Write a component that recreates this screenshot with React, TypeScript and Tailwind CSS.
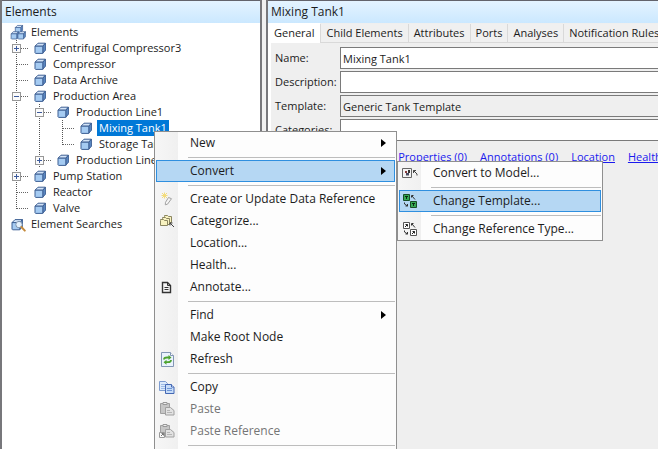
import type { ReactNode } from "react";

type Guide = "line" | "tee" | "end" | "plus" | "minus" | "none";

type TreeRow = { label: string; guides: Guide[]; icon?: "cube" | "cubes" | "search"; selected?: boolean };

const rows: TreeRow[] = [
  { label: "Centrifugal Compressor3", guides: ["plus"] },
  { label: "Compressor", guides: ["tee"] },
  { label: "Data Archive", guides: ["tee"] },
  { label: "Production Area", guides: ["minus"] },
  { label: "Production Line1", guides: ["line", "minus"] },
  { label: "Mixing Tank1", guides: ["line", "line", "tee"], selected: true },
  { label: "Storage Tank1", guides: ["line", "line", "end"] },
  { label: "Production Line2", guides: ["line", "plus"] },
  { label: "Pump Station", guides: ["plus"] },
  { label: "Reactor", guides: ["tee"] },
  { label: "Valve", guides: ["end"] },
];

function CubeShape() {
  return (
    <g stroke="#3d5f93" strokeWidth="1" strokeLinejoin="round">
      <path d="M1 4.2 4 1.2h7.4l-2.6 3z" fill="#d3e4f8" />
      <path d="M8.8 4.2l2.6-3v7l-2.6 3z" fill="#5f8cc6" />
      <path d="M1 4.2h7.8v7.2H1.6L1 10.8z" fill="#a5cbf2" />
    </g>
  );
}

function CubeIcon() {
  return (
    <svg viewBox="0 0 12 12" className="h-3 w-3 shrink-0" aria-hidden="true">
      <CubeShape />
    </svg>
  );
}

function CubesIcon() {
  return (
    <svg viewBox="0 0 16 16" className="h-4 w-4 shrink-0" aria-hidden="true">
      <g transform="translate(4.6 0.6) scale(0.7)"><CubeShape /></g>
      <g transform="translate(0.4 6.8) scale(0.72)"><CubeShape /></g>
      <g transform="translate(7.2 6.8) scale(0.72)"><CubeShape /></g>
    </svg>
  );
}

function SearchCubeIcon() {
  return (
    <svg viewBox="0 0 16 16" className="h-4 w-4 shrink-0" aria-hidden="true">
      <g transform="translate(1 2.4)"><CubeShape /></g>
      <circle cx="9" cy="8.6" r="3.2" fill="#e3f1fd" stroke="#7f93ad" />
      <path d="M11.4 11l3.4 3.6" stroke="#c58a3c" strokeWidth="2" strokeLinecap="round" />
    </svg>
  );
}

function GuideCell({ kind, label }: { kind: Guide; label: string }) {
  const box = kind === "plus" || kind === "minus";
  const svg = (
    <svg viewBox="0 0 23 16" className="block h-4 w-[23px]" aria-hidden="true" shapeRendering="crispEdges">
      {kind !== "none" && (
        <path d={kind === "end" ? "M5.5 0V9" : "M5.5 0V16"} stroke="#555" strokeDasharray="1 1" />
      )}
      {kind !== "line" && kind !== "none" && <path d="M6 8.5h12" stroke="#666" strokeDasharray="1 1" />}
      {box && (
        <>
          <rect x="1.5" y="4.5" width="8" height="8" fill="#fbfbfb" stroke="#979797" />
          <path d="M3 8.5h5" stroke="#3c5a9c" />
          {kind === "plus" && <path d="M5.5 6v5" stroke="#3c5a9c" />}
        </>
      )}
    </svg>
  );
  return box ? (
    <button type="button" aria-label={`Toggle ${label}`} className="shrink-0">{svg}</button>
  ) : (
    <span className="shrink-0">{svg}</span>
  );
}

function Header({ children }: { children: ReactNode }) {
  return (
    <h2 className="flex h-[23px] items-center border-t border-[#63636b] bg-linear-to-b from-[#e4f3ff] to-[#cbe8ff] px-[3px] text-xs text-[#1c1c1c]">
      {children}
    </h2>
  );
}

function ElementsTree() {
  return (
    <ul className="pt-px text-[11px] leading-4">
      <li className="flex h-4 items-center gap-[3px] pl-2">
        <CubesIcon />
        <span className="px-0.5">Elements</span>
      </li>
      {rows.map((r) => (
        <li key={r.label} className="flex h-4 items-center pl-[9px]">
          {r.guides.map((g, i) => (
            <GuideCell key={i} kind={g} label={r.label} />
          ))}
          <CubeIcon />
          <span className={r.selected ? "ml-[5px] bg-[#0078d7] px-0.5 text-white" : "ml-[5px] px-0.5"}>{r.label}</span>
        </li>
      ))}
      <li className="flex h-4 items-center gap-[3px] pl-2">
        <SearchCubeIcon />
        <span className="px-0.5">Element Searches</span>
      </li>
    </ul>
  );
}

const tabs = ["Child Elements", "Attributes", "Ports", "Analyses", "Notification Rules", "Workflow"];

function Field({ id, label, value, readOnly }: { id: string; label: string; value?: string; readOnly?: boolean }) {
  return (
    <div className="flex items-center">
      <label htmlFor={id} className="w-[65px] shrink-0">{label}</label>
      <input
        id={id}
        defaultValue={value}
        readOnly={readOnly}
        className={
          readOnly
            ? "h-[22px] min-w-0 flex-1 border border-r-0 border-[#7a7a7a] bg-[#efefef] px-0.5 outline-none"
            : "h-[22px] min-w-0 flex-1 border border-r-0 border-[#7a7a7a] bg-white px-0.5 outline-none"
        }
      />
    </div>
  );
}

function Details() {
  return (
    <section className="flex min-w-0 flex-1 flex-col overflow-hidden border-l-2 border-[#77777b] bg-white">
      <Header>Mixing Tank1</Header>
      <div role="tablist" className="flex h-5 shrink-0 items-stretch overflow-hidden bg-[#efefef] text-[11px] whitespace-nowrap">
        <button role="tab" aria-selected="true" className="shrink-0 bg-white px-1.5">General</button>
        {tabs.map((t) => (
          <button key={t} role="tab" aria-selected="false" className="mt-px shrink-0 border-b border-l border-[#d9d9d9] bg-[#f0f0f0] px-[5px]">
            {t}
          </button>
        ))}
      </div>
      <div className="ml-[3px] flex-1 overflow-hidden bg-[#efefef] pt-1 pl-1 text-[11px]">
        <div className="flex flex-col gap-0.5">
          <Field id="name" label="Name:" value="Mixing Tank1" />
          <Field id="description" label="Description:" />
          <Field id="template" label="Template:" value="Generic Tank Template" readOnly />
          <Field id="categories" label="Categories:" />
        </div>
        <nav className="mt-2 flex gap-[13px] pl-[72px] leading-4 whitespace-nowrap text-[#1a1aee] underline">
          <a href="#properties">Extended Properties (0)</a>
          <a href="#annotations">Annotations (0)</a>
          <a href="#location">Location</a>
          <a href="#health">Health</a>
          <a href="#security">Security</a>
        </nav>
      </div>
    </section>
  );
}

function PencilIcon() {
  return (
    <svg viewBox="0 0 16 16" className="h-4 w-4" aria-hidden="true">
      <path d="M3 2l5 5M8 2L3 7M5.5 1.5v6M2.5 4.5h6" stroke="#f3dc7c" />
      <path d="M9.5 6.5l3 1.2-4 5.5-2.2.6.2-2.5z" fill="#f5f5f5" stroke="#a2a2a2" />
    </svg>
  );
}

function CategorizeIcon() {
  return (
    <svg viewBox="0 0 16 16" className="h-4 w-4" aria-hidden="true">
      <g fill="#f8f2c0" stroke="#8b8660">
        <path d="M5.5 3.5v-1h3l1 1h3v6h-7z" />
        <path d="M3.5 5.5v-1h3l1 1h3v6h-7z" />
        <path d="M1.5 7.5v-1h3l1 1h3v5h-7z" />
      </g>
      <path d="M11 10l4 4M11 12.5V10h2.5" stroke="#444" fill="none" />
    </svg>
  );
}

function AnnotateIcon() {
  return (
    <svg viewBox="0 0 16 16" className="h-4 w-4" aria-hidden="true" fill="none" stroke="#333">
      <path d="M3.5 3.5h5l3 3v7h-8z" strokeWidth="1.4" />
      <path d="M8.5 3.5v3h3M5.5 8.5h4M5.5 10.5h4" />
    </svg>
  );
}

function RefreshIcon() {
  return (
    <svg viewBox="0 0 16 16" className="h-4 w-4" aria-hidden="true">
      <path d="M2.5 1.5h9l3 3v11h-12z" fill="#eaf3fd" stroke="#8296b4" />
      <path d="M11.5 1.5v3h3" fill="#fff" stroke="#8296b4" />
      <g fill="none" stroke="#4da32f" strokeWidth="1.8">
        <path d="M5 8.5c0-1.6 1.2-2 3-2h2" />
        <path d="M12 9c0 1.8-1.200 2.200-3 2.200H7" />
      </g>
      <path d="M9.500 4l3 2.500-3 2.500zM7.500 8.700l-3 2.500 3 2.500z" fill="#4da32f" />
    </svg>
  );
}

function CopyIcon() {
  return (
    <svg viewBox="0 0 16 16" className="h-4 w-4" aria-hidden="true">
      <path d="M.5 2.500h6l2 2v7h-8z" fill="#dceafb" stroke="#7d9cd0" />
      <path d="M2 5.500h4M2 7.500h4M2 9.500h4" stroke="#9dbbe6" />
      <path d="M6.500 5.500h6l2.500 2.500v6.500H6.500z" fill="#c6dcf8" stroke="#4468b4" />
      <path d="M12.500 5.500V8H15" fill="#fff" stroke="#4468b4" />
      <path d="M8 9.500h5M8 11.500h5" stroke="#6f96d6" />
    </svg>
  );
}

function PasteIcon({ shortcut }: { shortcut?: boolean }) {
  return (
    <svg viewBox="0 0 16 16" className="h-4 w-4" aria-hidden="true">
      <path d="M1.500 2.500h9v10h-9z" fill="#c6c6c6" stroke="#a0a0a0" />
      <path d="M4 1.500h4v2H4z" fill="#eee" stroke="#999" />
      <path d="M6.500 6.500h5l3.500 3v4.500H6.500z" fill="#e2e2e2" stroke="#a0a0a0" />
      <path d="M8 9.500h3M8 11.500h5" stroke="#b5b5b5" />
      {shortcut && (
        <>
          <path d="M.5 9.500h5v5h-5z" fill="#fafafa" stroke="#999" />
          <path d="M2 13l2.500-2.500M2.500 10.500h2v2" stroke="#777" fill="none" />
        </>
      )}
    </svg>
  );
}

function ModelIcon() {
  return (
    <svg viewBox="0 0 16 16" className="h-4 w-4" aria-hidden="true" fill="none">
      <path d="M.5 3.500h9v9h-9z" fill="#f4f4f4" stroke="#666" />
      <path d="M3 6h2v2H3z" fill="#8b3b3b" />
      <path d="M6 5h2v3H6z" fill="#333" />
      <path d="M4 8h3v2.500H4z" fill="#4a4a60" />
      <path d="M11.500 5.500L15 9v1.500M11.500 8V5.500H14" stroke="#444" />
    </svg>
  );
}

function SwapIcon({ green }: { green?: boolean }) {
  const fill = green ? "#35a853" : "#fff";
  const stroke = green ? "#174d26" : "#555";
  return (
    <svg viewBox="0 0 16 16" className="h-4 w-4" aria-hidden="true" fill="none">
      <path d="M1.500 1.500h6v6h-6zM8.500 8.500h6v6h-6z" fill={fill} stroke={stroke} />
      {green ? (
        <path d="M3 3.500h3M4.500 3.500V6M10 10.500h3M11.500 10.500V13" stroke="#0a2913" />
      ) : (
        <path d="M3 6l2.500-2.500M3.500 3.500h2v2M10 13l2.500-2.500M10.500 10.500h2v2" stroke="#222" />
      )}
      <path d="M9.500 4.500V2.500h2M10 3l3 3.500M2.500 9.500v1.500l3 2M5.500 11v2h-2" stroke="#333" />
    </svg>
  );
}

function MenuItem({ label, icon, arrow, active, disabled }: { label: string; icon?: ReactNode; arrow?: boolean; active?: boolean; disabled?: boolean }) {
  return (
    <li>
      <button
        type="button"
        role="menuitem"
        disabled={disabled}
        className={
          active
            ? "flex h-[22px] w-full items-center border border-[#2f8fdf] bg-[#b5d7f3] pr-2 text-left"
            : disabled
              ? "flex h-[22px] w-full items-center border border-transparent pr-2 text-left text-[#757575]"
              : "flex h-[22px] w-full items-center border border-transparent pr-2 text-left"
        }
      >
        <span className="flex w-[33px] shrink-0 pl-[2px]">{icon}</span>
        <span className="flex-1">{label}</span>
        {arrow && (
          <svg viewBox="0 0 5 8" className="h-2 w-[5px]" aria-hidden="true">
            <path d="M0 0l5 4-5 4z" fill="#000" />
          </svg>
        )}
      </button>
    </li>
  );
}

function Separator() {
  return (
    <li role="separator" className="flex h-1.5 items-center pl-8">
      <span className="h-px w-full bg-[#bdbdbd]" />
    </li>
  );
}

function ContextMenu() {
  return (
    <ul role="menu" className="absolute top-[131px] bottom-0 left-[154px] w-[243px] overflow-hidden border border-b-0 border-[#8f8f8f] bg-linear-to-r from-[#f6f6f6] from-0% via-[#f0f0f0] via-[23px] to-[#fdfdfd] to-[23px] px-px text-xs">
      <MenuItem label="New" arrow />
      <Separator />
      <MenuItem label="Convert" arrow active />
      <Separator />
      <MenuItem label="Create or Update Data Reference" icon={<PencilIcon />} />
      <MenuItem label="Categorize..." icon={<CategorizeIcon />} />
      <MenuItem label="Location..." />
      <MenuItem label="Health..." />
      <MenuItem label="Annotate..." icon={<AnnotateIcon />} />
      <Separator />
      <MenuItem label="Find" arrow />
      <MenuItem label="Make Root Node" />
      <MenuItem label="Refresh" icon={<RefreshIcon />} />
      <Separator />
      <MenuItem label="Copy" icon={<CopyIcon />} />
      <MenuItem label="Paste" icon={<PasteIcon />} disabled />
      <MenuItem label="Paste Reference" icon={<PasteIcon shortcut />} disabled />
      <Separator />
    </ul>
  );
}

function ConvertMenu() {
  return (
    <ul role="menu" className="absolute top-[161px] left-[397px] w-[206px] border border-[#8f8f8f] bg-linear-to-r from-[#f6f6f6] from-0% via-[#f0f0f0] via-[23px] to-[#fdfdfd] to-[23px] px-px text-xs">
      <MenuItem label="Convert to Model..." icon={<ModelIcon />} />
      <Separator />
      <MenuItem label="Change Template..." icon={<SwapIcon green />} active />
      <Separator />
      <MenuItem label="Change Reference Type..." icon={<SwapIcon />} />
    </ul>
  );
}

export default function App() {
  return (
    <main className="relative flex h-screen gap-1 overflow-hidden bg-[#f0f0f0] font-['Open_Sans','Noto_Sans',sans-serif] text-[#1c1c1c]">
      <section className="w-[262px] shrink-0 overflow-hidden border-x-2 border-[#77777b] bg-white">
        <Header>Elements</Header>
        <ElementsTree />
      </section>
      <Details />
      <ContextMenu />
      <ConvertMenu />
    </main>
  );
}
